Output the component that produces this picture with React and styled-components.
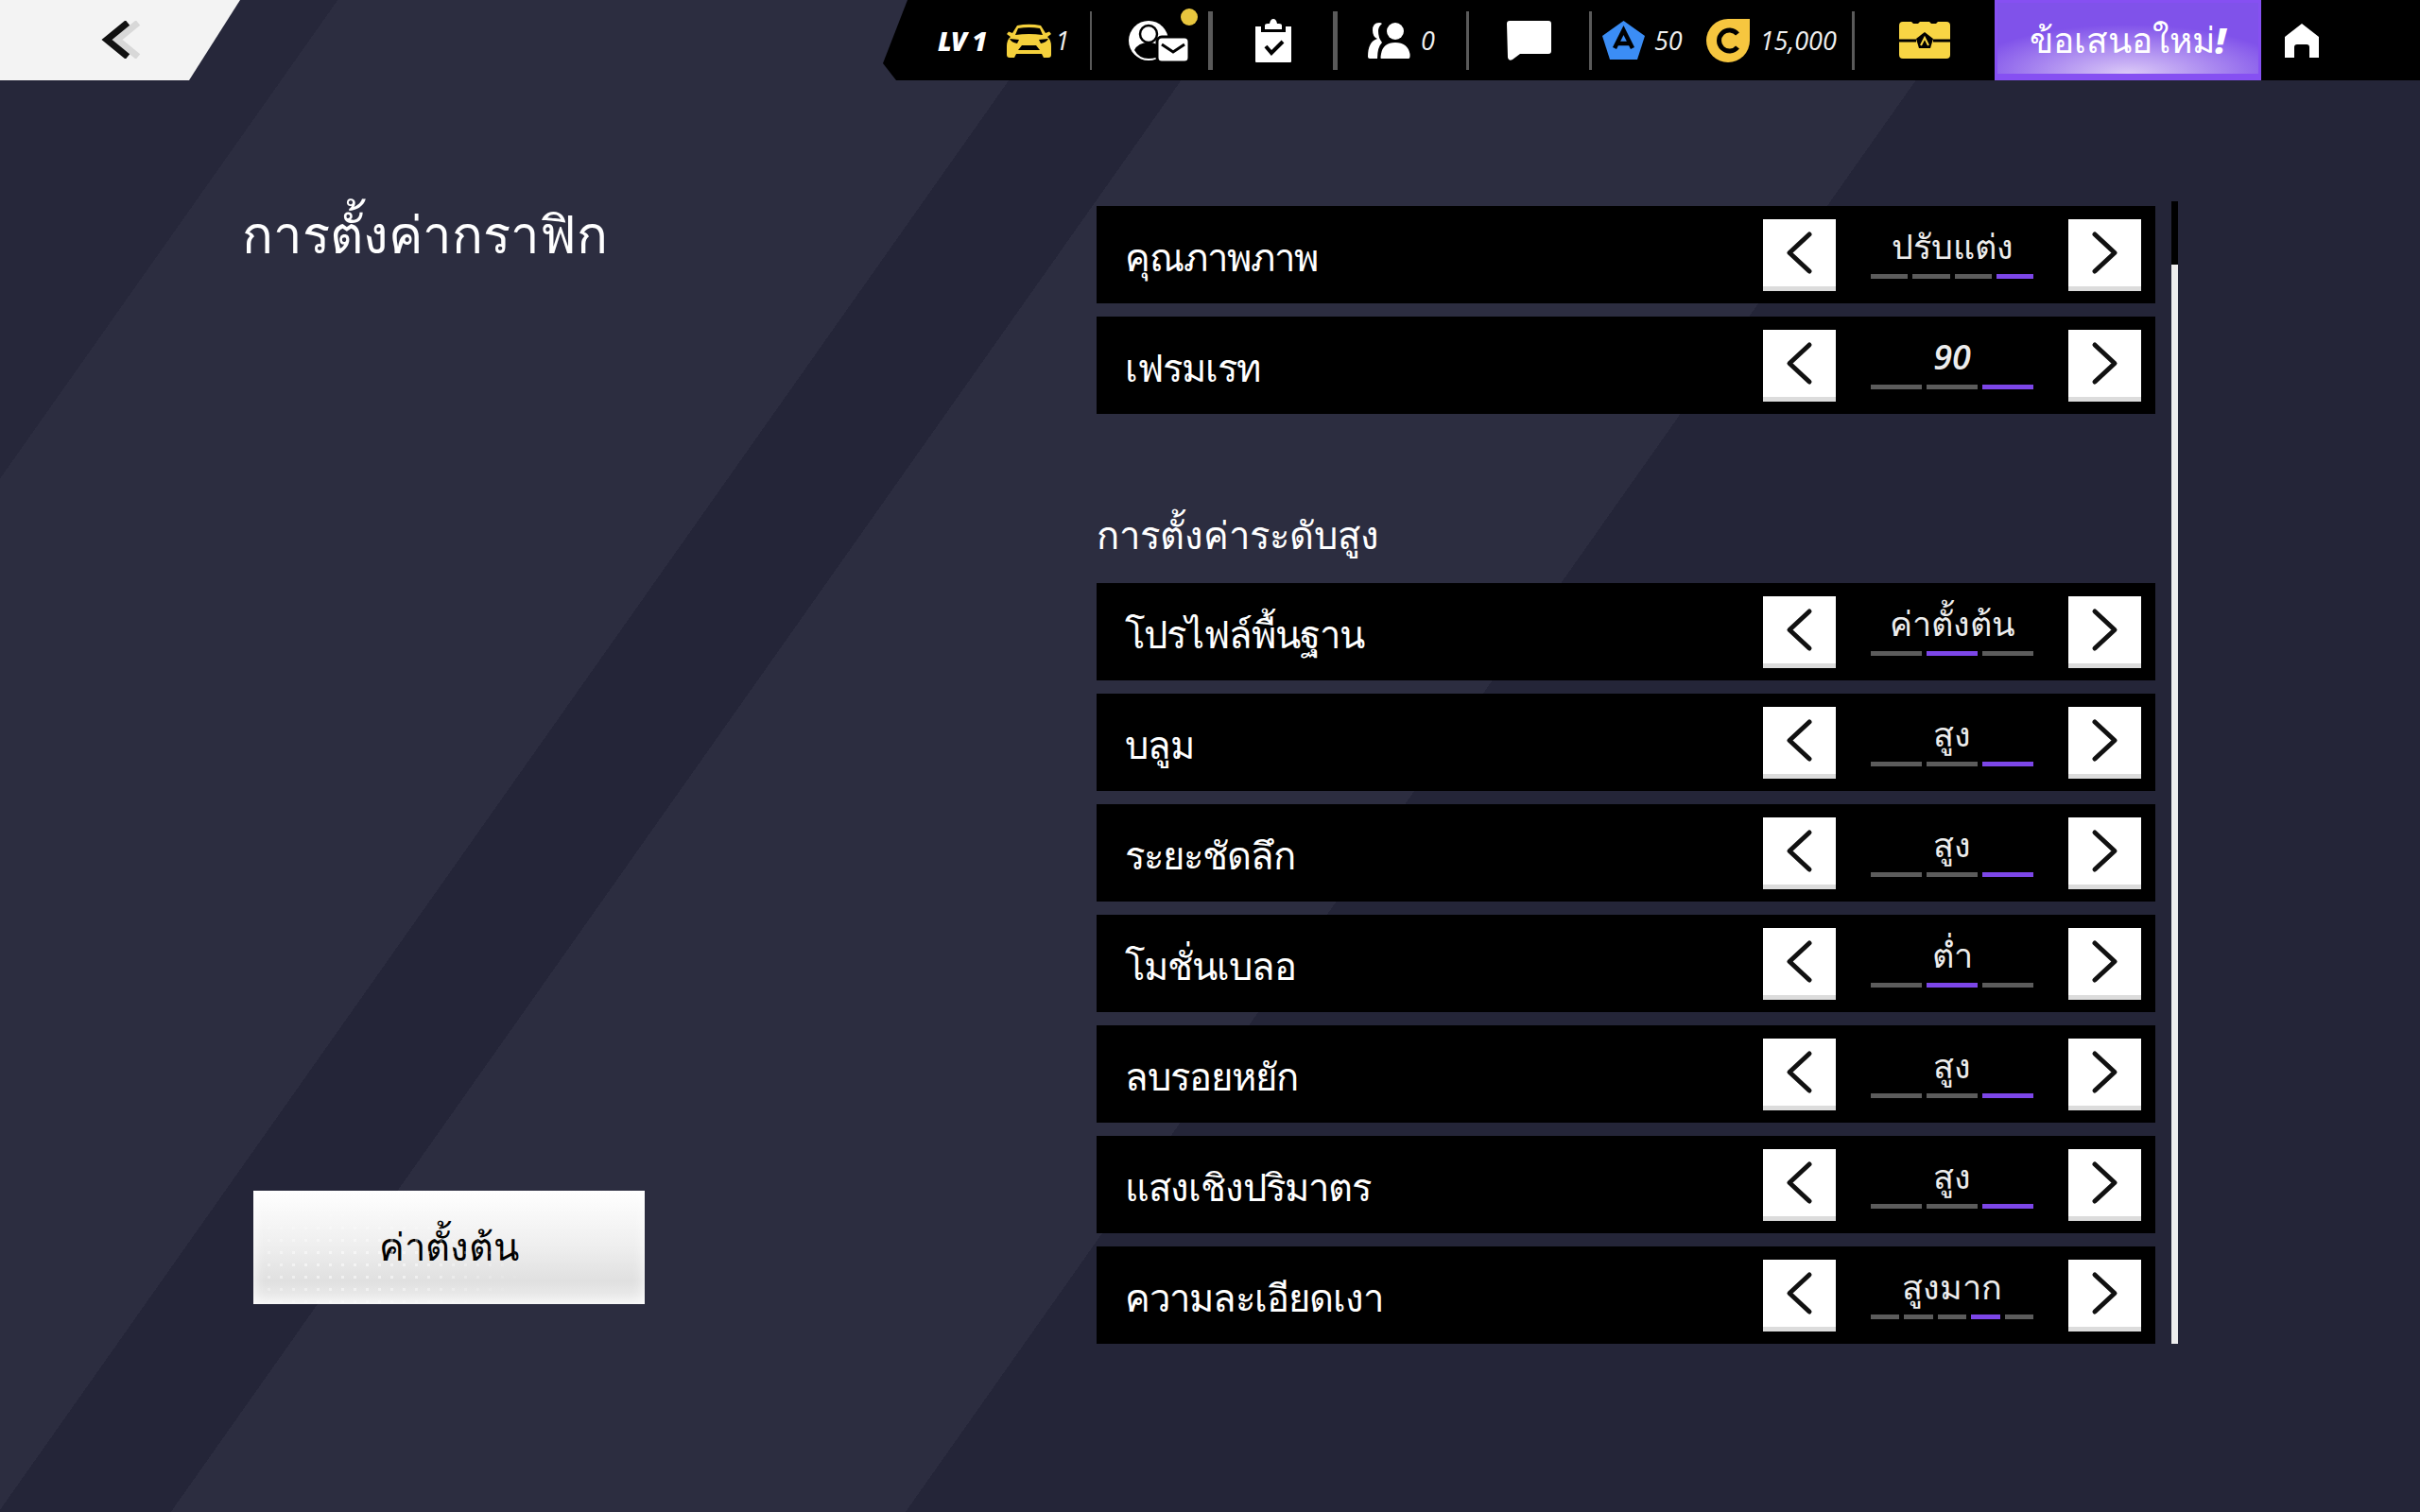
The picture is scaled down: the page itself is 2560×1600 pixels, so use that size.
import React from 'react';
import styled, { createGlobalStyle } from 'styled-components';

const thai = `"Noto Sans", "Open Sans", "DejaVu Sans", sans-serif`;
const latin = `"Open Sans", "Noto Sans", sans-serif`;

const GlobalStyle = createGlobalStyle`
  html, body { margin: 0; padding: 0; background: #2c2d40; }
  * { box-sizing: border-box; }
`;

const topRows = [
  { label: 'คุณภาพภาพ', value: 'ปรับแต่ง', count: 4, active: 3 },
  { label: 'เฟรมเรท', value: '90', count: 3, active: 2, numeric: true },
];

const advancedRows = [
  { label: 'โปรไฟล์พื้นฐาน', value: 'ค่าตั้งต้น', count: 3, active: 1 },
  { label: 'บลูม', value: 'สูง', count: 3, active: 2 },
  { label: 'ระยะชัดลึก', value: 'สูง', count: 3, active: 2 },
  { label: 'โมชั่นเบลอ', value: 'ต่ำ', count: 3, active: 1 },
  { label: 'ลบรอยหยัก', value: 'สูง', count: 3, active: 2 },
  { label: 'แสงเชิงปริมาตร', value: 'สูง', count: 3, active: 2 },
  { label: 'ความละเอียดเงา', value: 'สูงมาก', count: 5, active: 3 },
];

function CarIcon() {
  return (
    <svg width="49" height="36" viewBox="0 0 49 36">
      <path fill="#f5d13c" d="M12 2Q24.500 -0.500 37 2L42 10L46 8.500L48 11L44 14Q48 17 48 24V33Q48 36 45 36H40L38 32H11L9 36H4Q1 36 1 33V24Q1 17 5 14L1 11L3 8.500L7 10Z" />
      <path fill="#000" d="M13 5Q24.500 3 36 5L39 12Q24.500 10 10 12Z" />
      <path fill="#000" d="M4 16L14 17L12 21Q6 20 4 16ZM45 16L35 17L37 21Q43 20 45 16ZM13 28L17 23H32L36 28Z" />
    </svg>
  );
}

function MailIcon() {
  return (
    <svg width="64" height="46" viewBox="0 0 64 46">
      <circle cx="21" cy="23" r="21" fill="#fff" />
      <path fill="#000" d="M6 33Q10 25 21 25Q32 25 36 33L37 37Q30 42 21 42Q11 42 6 33Z" />
      <circle cx="21" cy="16" r="9" fill="#fff" stroke="#000" strokeWidth="2.500" />
      <rect x="30" y="19" width="34" height="27" rx="5" fill="#fff" stroke="#000" strokeWidth="3" />
      <path d="M35 27L47 35L59 27" fill="none" stroke="#000" strokeWidth="3" />
    </svg>
  );
}

function ClipboardIcon() {
  return (
    <svg width="38" height="46" viewBox="0 0 38 46">
      <path fill="#fff" d="M0 8H6V14H32V8H38V45Q38 46 37 46H1Q0 46 0 45Z" />
      <path fill="#fff" d="M10 11V7Q10 5 13 5H15Q16 0 19 0Q22 0 23 5H25Q28 5 28 7V11Z" />
      <path d="M11 29L17 36L29 24" fill="none" stroke="#000" strokeWidth="4" />
    </svg>
  );
}

function FriendsIcon() {
  return (
    <svg width="45" height="38" viewBox="0 0 45 38">
      <path fill="#fff" d="M12 0Q5 0 5 8Q5 15 10 17Q0 20 0 36Q0 38 2 38H10Q10 26 15 21Q11 16 11 9Q11 4 15 1Q14 0 12 0Z" />
      <circle cx="29" cy="9" r="9" fill="#fff" />
      <path fill="#fff" d="M14 38Q13 38 14 33Q16 21 29 21Q42 21 44.500 33Q45 38 43 38Z" />
    </svg>
  );
}

function ChatIcon() {
  return (
    <svg width="47" height="42" viewBox="0 0 47 42">
      <path fill="#fff" d="M3 0H44Q47 0 47 3V32Q47 35 44 35H14L6 41Q2 43 1 39L0 3Q0 0 3 0Z" />
    </svg>
  );
}

function DiamondIcon() {
  return (
    <svg width="45" height="41" viewBox="0 0 45 41">
      <path fill="#3b8df5" d="M22.500 0L45 16L37 41H8L0 16Z" />
      <path d="M13 29L22.500 10L32 29M16 24H29" fill="none" stroke="#000" strokeWidth="4.500" />
    </svg>
  );
}

function CoinIcon() {
  return (
    <svg width="46" height="46" viewBox="0 0 46 46">
      <path fill="#f6c63f" d="M23 0H46V23A23 23 0 1 1 23 0Z" />
      <path d="M33 16A11 11 0 1 0 33 30" fill="none" stroke="#000" strokeWidth="5" />
    </svg>
  );
}

function ChestIcon() {
  return (
    <svg width="54" height="39" viewBox="0 0 54 39">
      <path fill="#f8d544" d="M4 0H13L15 2H20L22 0H32L34 2H39L41 0H50Q54 0 54 4V35Q54 39 50 39H4Q0 39 0 35V4Q0 0 4 0Z" />
      <path d="M0 20H18M36 20H54" stroke="#000" strokeWidth="3" />
      <path fill="#000" d="M27 11L36 18L33 28H21L18 18Z" />
      <path d="M23 25L27 17L31 25" fill="none" stroke="#f8d544" strokeWidth="2" />
    </svg>
  );
}

function HomeIcon() {
  return (
    <svg width="36" height="36" viewBox="0 0 36 36">
      <path fill="#fff" d="M18 0L36 14V36H26V25Q26 22 23 22H13Q10 22 10 25V36H0V14Z" />
    </svg>
  );
}

function BackChevrons() {
  return (
    <svg width="45" height="40" viewBox="0 0 45 40">
      <path d="M42 2L20 20L42 38" fill="none" stroke="#d8d8d8" strokeWidth="7" />
      <path d="M31 2L9 20L31 38" fill="none" stroke="#111" strokeWidth="7" />
    </svg>
  );
}

function Chevron({ right }) {
  return (
    <svg width="29" height="47" viewBox="0 0 29 47">
      <path d={right ? 'M4 4L25 23.500L4 43' : 'M25 4L4 23.500L25 43'} fill="none" stroke="#111" strokeWidth="5" strokeLinecap="round" strokeLinejoin="round" />
    </svg>
  );
}

function SettingRow({ label, value, count, active, numeric }) {
  return (
    <Row>
      <RowLabel>{label}</RowLabel>
      <StepButton><Chevron /></StepButton>
      <ValueBox>
        <ValueText $numeric={numeric}>{value}</ValueText>
        <Segments>
          {Array.from({ length: count }, (_, i) => <Segment key={i} $on={i === active} />)}
        </Segments>
      </ValueBox>
      <StepButton><Chevron right /></StepButton>
    </Row>
  );
}

export default function App() {
  return (
    <Screen>
      <GlobalStyle />
      <TopBar>
        <BackButton><BackChevrons /></BackButton>
        <StatusBar>
          <Cell $width={219} $pad={58}>
            <LevelText>LV 1</LevelText>
            <CarWrap><CarIcon /></CarWrap>
            <CountText>1</CountText>
          </Cell>
          <Divider $w={2} />
          <Cell $width={123} $pad={39}>
            <IconWrap>
              <MailIcon />
              <Dot />
            </IconWrap>
          </Cell>
          <Divider $w={5} />
          <Cell $width={127} $center><ClipboardIcon /></Cell>
          <Divider $w={5} />
          <Cell $width={136} $pad={32}>
            <FriendsIcon />
            <CountText $gap={11}>0</CountText>
          </Cell>
          <Divider $w={3} />
          <Cell $width={127} $center><ChatIcon /></Cell>
          <Divider $w={3} />
          <Cell $width={275} $pad={11}>
            <DiamondIcon />
            <CountText $gap={10}>50</CountText>
            <CoinWrap><CoinIcon /></CoinWrap>
            <CountText $gap={11}>15,000</CountText>
          </Cell>
          <Divider $w={3} />
          <Cell $width={148} $center><ChestIcon /></Cell>
          <OfferButton>ข้อเสนอใหม่<Bang>!</Bang></OfferButton>
          <Cell $width={168} $pad={25}><HomeIcon /></Cell>
        </StatusBar>
      </TopBar>

      <Main>
        <LeftPanel>
          <Title>การตั้งค่ากราฟิก</Title>
          <ResetButton>ค่าตั้งต้น</ResetButton>
        </LeftPanel>

        <SettingsColumn>
          <RowGroup>
            {topRows.map((r) => <SettingRow key={r.label} {...r} />)}
          </RowGroup>
          <SectionTitle>การตั้งค่าระดับสูง</SectionTitle>
          <RowGroup>
            {advancedRows.map((r) => <SettingRow key={r.label} {...r} />)}
          </RowGroup>
        </SettingsColumn>

        <ScrollTrack>
          <ScrollTop />
          <ScrollThumb />
        </ScrollTrack>
      </Main>
    </Screen>
  );
}

const Screen = styled.div`
  width: 2560px;
  height: 1600px;
  overflow: hidden;
  display: flex;
  flex-direction: column;
  color: #fff;
  font-family: ${thai};
  background: linear-gradient(
    125.2deg,
    #26273a 0 292px,
    #2c2d40 292px 921px,
    #242538 921px 1070px,
    #2c2d40 1070px 1705px,
    #242538 1705px
  );
`;

const TopBar = styled.div`
  height: 85px;
  display: flex;
  justify-content: space-between;
`;

const BackButton = styled.div`
  width: 254px;
  height: 85px;
  padding: 22px 0 0 104px;
  background: #f3f3f3;
  clip-path: polygon(0 0, 100% 0, 200px 100%, 0 100%);
`;

const StatusBar = styled.div`
  width: 1626px;
  height: 85px;
  display: flex;
  align-items: flex-start;
  background: #000;
  clip-path: polygon(26px 0, 100% 0, 100% 100%, 14px 100%, 0 67px);
`;

const Cell = styled.div`
  width: ${(p) => p.$width}px;
  height: 85px;
  flex: none;
  display: flex;
  align-items: center;
  justify-content: ${(p) => (p.$center ? 'center' : 'flex-start')};
  padding-left: ${(p) => p.$pad || 0}px;
`;

const Divider = styled.div`
  width: ${(p) => p.$w}px;
  height: 62px;
  flex: none;
  margin-top: 12px;
  background: #5a5a5a;
`;

const LevelText = styled.span`
  font-family: ${latin};
  font-size: 28px;
  font-weight: 800;
  font-style: italic;
  letter-spacing: -1px;
`;

const CountText = styled.span`
  margin-left: ${(p) => p.$gap || 4}px;
  font-family: ${latin};
  font-size: 27px;
  font-style: italic;
  color: #f0f0f0;
`;

const CarWrap = styled.div`
  display: flex;
  margin-left: 20px;
`;

const CoinWrap = styled.div`
  display: flex;
  margin-left: 25px;
`;

const IconWrap = styled.div`
  position: relative;
  display: flex;
`;

const Dot = styled.span`
  position: absolute;
  top: -11px;
  right: -9px;
  width: 18px;
  height: 18px;
  border-radius: 50%;
  background: #e8c63e;
`;

const OfferButton = styled.div`
  width: 282px;
  height: 85px;
  flex: none;
  display: flex;
  align-items: center;
  justify-content: center;
  padding-top: 3px;
  font-size: 37px;
  border: solid #8650f2;
  border-width: 3px 3px 7px;
  background:
    radial-gradient(ellipse 170px 52px at 50% 100%, #dbc9f7 0%, rgba(219, 201, 247, 0) 100%),
    #8052ea;
`;

const Bang = styled.span`
  font-family: ${latin};
  font-weight: 800;
  font-style: italic;
`;

const Main = styled.div`
  flex: 1;
  display: flex;
  align-items: flex-start;
`;

const LeftPanel = styled.div`
  width: 1160px;
  height: 1515px;
  flex: none;
  display: flex;
  flex-direction: column;
  align-items: flex-start;
  padding: 117px 0 220px 256px;
`;

const Title = styled.h1`
  margin: 0;
  font-size: 54.500px;
  font-weight: 400;
  line-height: 90px;
`;

const ResetButton = styled.div`
  position: relative;
  width: 414px;
  height: 120px;
  margin: auto 0 0 12px;
  display: flex;
  align-items: center;
  justify-content: center;
  color: #000;
  font-size: 40px;
  background: linear-gradient(180deg, #ffffff 0%, #eeeeee 50%, #e0e0e0 80%, #efefef 100%);
  box-shadow: inset 0 0 14px #fff;
  &::before {
    content: '';
    position: absolute;
    inset: 20px 120px 0 10px;
    opacity: 0.55;
    background-image: radial-gradient(circle, #ffffff 1.500px, transparent 2px);
    background-size: 13px 13px;
    -webkit-mask-image: radial-gradient(ellipse at 35% 60%, #000 20%, transparent 72%);
    mask-image: radial-gradient(ellipse at 35% 60%, #000 20%, transparent 72%);
  }
`;

const SettingsColumn = styled.div`
  width: 1120px;
  flex: none;
  padding-top: 133px;
`;

const RowGroup = styled.div`
  display: flex;
  flex-direction: column;
  gap: 14px;
`;

const SectionTitle = styled.h2`
  height: 70px;
  margin: 93px 0 16px;
  font-size: 40px;
  font-weight: 400;
  line-height: 70px;
`;

const Row = styled.div`
  height: 103px;
  display: flex;
  align-items: flex-start;
  padding: 14px 15px 0 30px;
  background: #000;
`;

const RowLabel = styled.div`
  flex: 1;
  font-size: 40px;
  letter-spacing: -1px;
  line-height: 79px;
`;

const StepButton = styled.div`
  width: 77px;
  height: 76px;
  flex: none;
  display: flex;
  align-items: center;
  justify-content: center;
  background: #fff;
  border-bottom: 5px solid #dcdcdc;
`;

const ValueBox = styled.div`
  width: 246px;
  flex: none;
  display: flex;
  flex-direction: column;
  align-items: center;
`;

const ValueText = styled.div`
  height: 58px;
  font-family: ${(p) => (p.$numeric ? latin : thai)};
  font-size: 36px;
  font-style: ${(p) => (p.$numeric ? 'italic' : 'normal')};
  font-weight: ${(p) => (p.$numeric ? 600 : 400)};
  line-height: 58px;
  color: #ededed;
`;

const Segments = styled.div`
  width: 172px;
  display: flex;
  gap: 5px;
`;

const Segment = styled.span`
  flex: 1;
  height: 5px;
  background: ${(p) => (p.$on ? '#7c46e8' : '#5c5c5c')};
`;

const ScrollTrack = styled.div`
  width: 7px;
  height: 1209px;
  flex: none;
  margin: 128px 0 0 17px;
  display: flex;
  flex-direction: column;
`;

const ScrollTop = styled.div`
  height: 67px;
  background: #000;
`;

const ScrollThumb = styled.div`
  flex: 1;
  background: #ededed;
`;
